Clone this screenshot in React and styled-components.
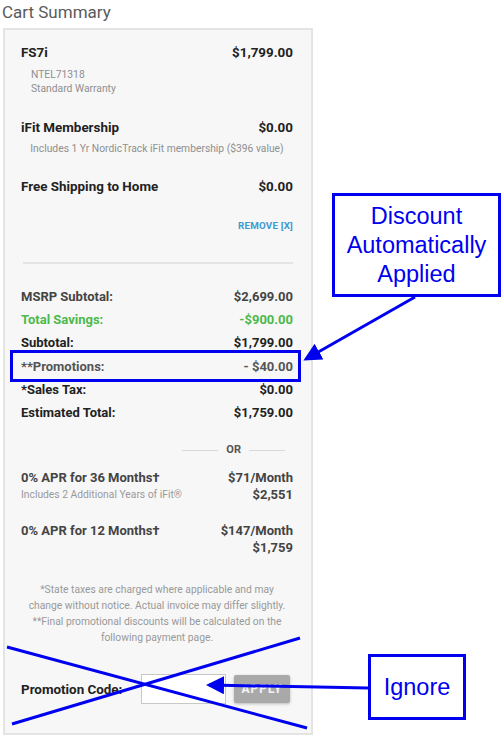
import React from "react";
import styled, { createGlobalStyle } from "styled-components";

const GlobalStyle = createGlobalStyle`
  body {
    margin: 0;
    background: #ffffff;
    font-family: Roboto, "Liberation Sans", Arial, sans-serif;
  }
`;

const Page = styled.div`
  position: relative;
  width: 502px;
  height: 738px;
  overflow: hidden;
`;

const Title = styled.h2`
  margin: 0 0 0 2px;
  font-size: 17px;
  line-height: 24px;
  font-weight: 400;
  color: #5a5a5a;
`;

const Panel = styled.div`
  margin: 4px 0 0 3px;
  width: 310px;
  box-sizing: border-box;
  border: 2px solid #e4e4e4;
  background: #f7f7f7;
  padding: 15px 18px 29px 16px;
`;

const Row = styled.div`
  display: flex;
  justify-content: space-between;
  align-items: baseline;
  font-size: ${(p) => p.$size || 13.4}px;
  line-height: ${(p) => p.$lh || 16}px;
  font-weight: ${(p) => p.$weight || 700};
  color: ${(p) => p.$color || "#222"};
  margin-top: ${(p) => p.$mt || 0}px;
`;

const Sub = styled.div`
  font-size: 10.3px;
  line-height: 14px;
  color: #8f8f8f;
  padding-left: ${(p) => p.$indent || 0}px;
  text-align: ${(p) => p.$align || "left"};
  margin-top: ${(p) => p.$mt || 0}px;
`;

const RemoveLink = styled.a`
  display: block;
  margin-top: 24px;
  text-align: right;
  font-size: 9.8px;
  line-height: 14px;
  font-weight: 700;
  color: #3d9ad3;
  letter-spacing: 0.2px;
`;

const Divider = styled.hr`
  margin: 29px 0 0 2px;
  border: none;
  border-top: 2px solid #e4e4e4;
`;

const Totals = styled.div`
  margin-top: 21px;
`;

const OrLine = styled.div`
  display: flex;
  justify-content: flex-end;
  align-items: center;
  gap: 8px;
  margin-top: 18px;
  padding-right: 8px;
  font-size: 11px;
  line-height: 16px;
  font-weight: 700;
  color: #555;

  &::before,
  &::after {
    content: "";
    width: 36px;
    border-top: 1px solid #d9d9d9;
  }
`;

const Plan = styled.div`
  display: flex;
  justify-content: space-between;
  margin-top: ${(p) => p.$mt}px;
  line-height: 17px;
`;

const PlanName = styled.div`
  font-size: 13px;
  font-weight: 700;
  color: #444;
`;

const PlanNote = styled.div`
  font-size: 10.3px;
  color: #9a9a9a;
`;

const PlanPrice = styled.div`
  text-align: right;
  font-size: 13px;
  font-weight: 700;
  color: #444;
`;

const Disclaimer = styled.p`
  margin: 26px 0 0 0;
  text-align: center;
  font-size: 10.3px;
  line-height: 16px;
  color: #999;
`;

const PromoRow = styled.div`
  display: flex;
  align-items: center;
  margin-top: 28px;
  height: 30px;
`;

const PromoLabel = styled.label`
  width: 120px;
  font-size: 13.4px;
  font-weight: 700;
  color: #222;
`;

const PromoInput = styled.input`
  width: 85px;
  height: 30px;
  box-sizing: border-box;
  border: 1px solid #c8c8c8;
  background: #fff;
`;

const ApplyButton = styled.button`
  margin-left: 8px;
  width: 56px;
  height: 28px;
  border: none;
  border-radius: 2px;
  background: #a9a9a9;
  color: #f4f4f4;
  font-family: inherit;
  font-size: 12px;
  font-weight: 700;
  letter-spacing: 1px;
  box-shadow: 0 1px 3px rgba(0, 0, 0, 0.25);
`;

const Overlay = styled.svg`
  position: absolute;
  left: 0;
  top: 0;
  pointer-events: none;
`;

const Callout = styled.div`
  position: absolute;
  left: ${(p) => p.$x}px;
  top: ${(p) => p.$y}px;
  width: ${(p) => p.$w}px;
  height: ${(p) => p.$h}px;
  box-sizing: border-box;
  border: 3px solid #0000f0;
  background: #fff;
  display: flex;
  align-items: center;
  justify-content: center;
  text-align: center;
  font-family: "Liberation Sans", Arial, sans-serif;
  font-size: 23.5px;
  line-height: 29px;
  color: #0000f0;
`;

const summary = [
  { label: "MSRP Subtotal:", value: "$2,699.00", color: "#444" },
  { label: "Total Savings:", value: "-$900.00", color: "#4cb94a" },
  { label: "Subtotal:", value: "$1,799.00", color: "#222" },
  { label: "**Promotions:", value: "- $40.00", color: "#555" },
  { label: "*Sales Tax:", value: "$0.00", color: "#222" },
  { label: "Estimated Total:", value: "$1,759.00", color: "#222" },
];

const BLUE = "#0000f0";

export default function App() {
  return (
    <Page>
      <GlobalStyle />
      <Title>Cart Summary</Title>
      <Panel>
        <Row>
          <span>FS7i</span>
          <span>$1,799.00</span>
        </Row>
        <Sub $indent={10} $mt={7}>NTEL71318</Sub>
        <Sub $indent={10}>Standard Warranty</Sub>

        <Row $mt={24}>
          <span>iFit Membership</span>
          <span>$0.00</span>
        </Row>
        <Sub $align="center" $mt={6}>
          Includes 1 Yr NordicTrack iFit membership ($396 value)
        </Sub>

        <Row $mt={23}>
          <span>Free Shipping to Home</span>
          <span>$0.00</span>
        </Row>
        <RemoveLink>REMOVE [X]</RemoveLink>

        <Divider />

        <Totals>
          {summary.map((s) => (
            <Row key={s.label} $size={13} $lh={23.2} $color={s.color}>
              <span>{s.label}</span>
              <span>{s.value}</span>
            </Row>
          ))}
        </Totals>

        <OrLine>OR</OrLine>

        <Plan $mt={11}>
          <div>
            <PlanName>0% APR for 36 Months†</PlanName>
            <PlanNote>Includes 2 Additional Years of iFit®</PlanNote>
          </div>
          <PlanPrice>
            $71/Month
            <br />
            $2,551
          </PlanPrice>
        </Plan>

        <Plan $mt={19}>
          <PlanName>0% APR for 12 Months†</PlanName>
          <PlanPrice>
            $147/Month
            <br />
            $1,759
          </PlanPrice>
        </Plan>

        <Disclaimer>
          *State taxes are charged where applicable and may
          <br />
          change without notice. Actual invoice may differ slightly.
          <br />
          **Final promotional discounts will be calculated on the
          <br />
          following payment page.
        </Disclaimer>

        <PromoRow>
          <PromoLabel>Promotion Code:</PromoLabel>
          <PromoInput />
          <ApplyButton>APPLY</ApplyButton>
        </PromoRow>
      </Panel>

      {/* annotations drawn on top of the screenshot */}
      <Overlay width="502" height="738" viewBox="0 0 502 738">
        <defs>
          <marker id="head" markerWidth="6" markerHeight="6" refX="5" refY="3" orient="auto" markerUnits="strokeWidth">
            <path d="M0,0 L6,3 L0,6 z" fill={BLUE} />
          </marker>
        </defs>
        <rect x="11.5" y="351.5" width="288" height="29" fill="none" stroke={BLUE} strokeWidth="3" />
        <line x1="415" y1="297" x2="306" y2="359" stroke={BLUE} strokeWidth="3" markerEnd="url(#head)" />
        <line x1="7" y1="647" x2="307" y2="728" stroke={BLUE} strokeWidth="3" />
        <line x1="12" y1="724" x2="300" y2="638" stroke={BLUE} strokeWidth="3" />
        <line x1="368" y1="688" x2="209" y2="685" stroke={BLUE} strokeWidth="3" markerEnd="url(#head)" />
      </Overlay>
      <Callout $x={332} $y={193} $w={169} $h={104}>
        Discount
        <br />
        Automatically
        <br />
        Applied
      </Callout>
      <Callout $x={368} $y={654} $w={98} $h={66}>
        Ignore
      </Callout>
    </Page>
  );
}
